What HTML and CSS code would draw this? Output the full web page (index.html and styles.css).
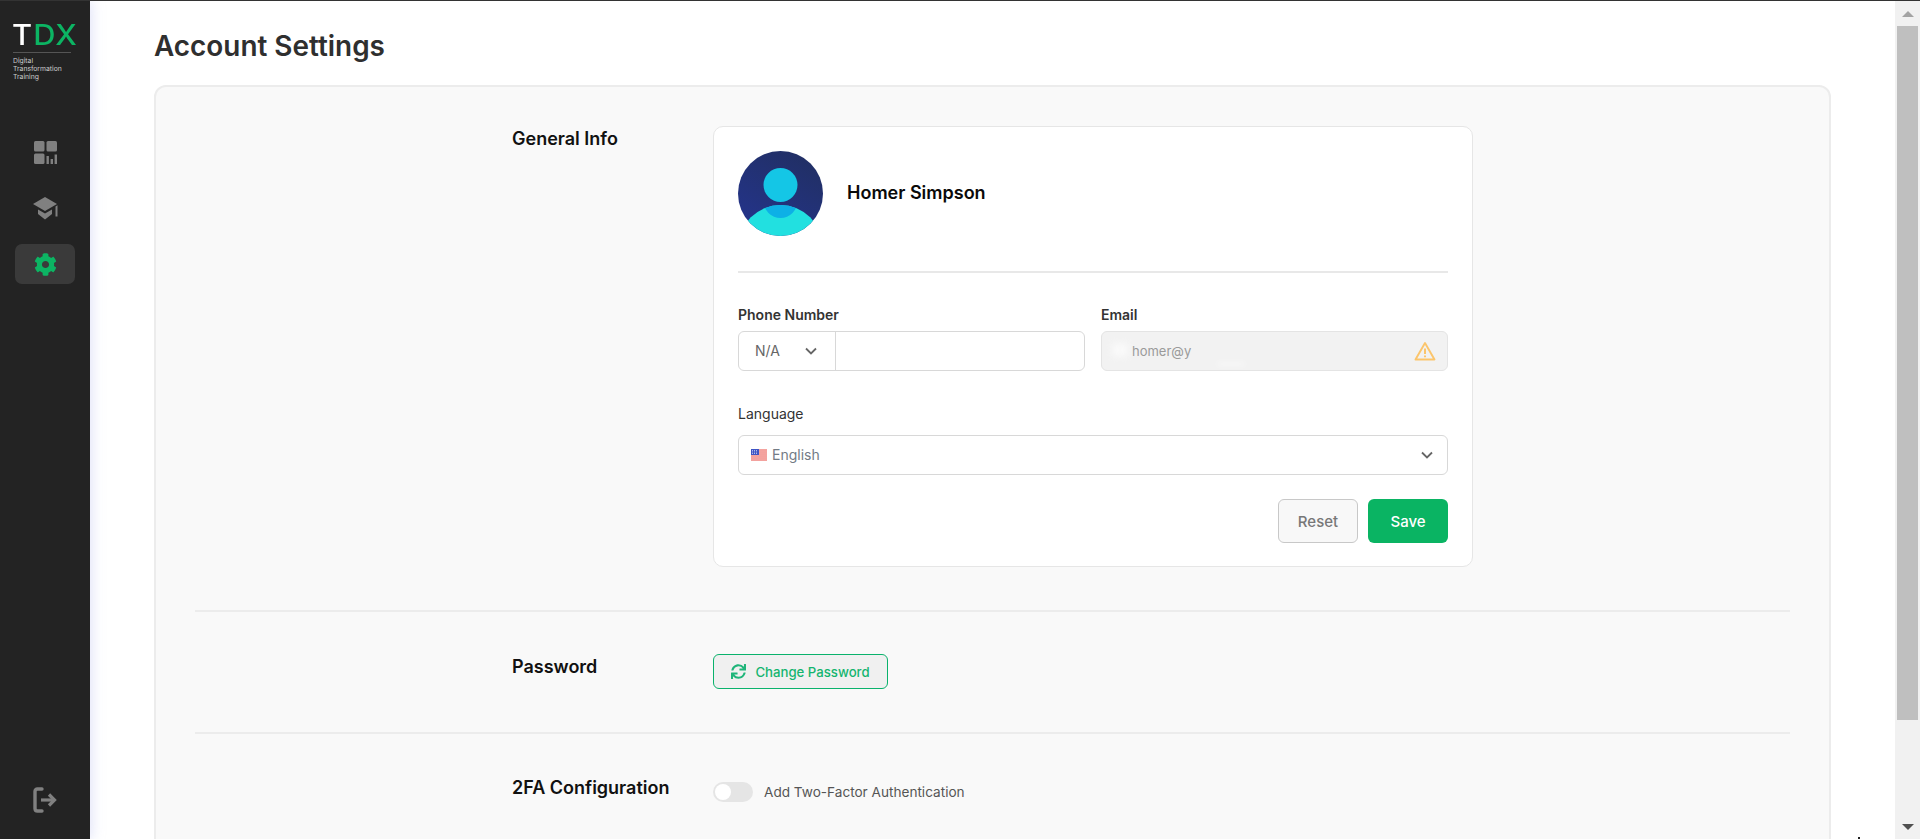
FILE: index.html
```html
<!DOCTYPE html>
<html lang="en">
<head>
<meta charset="utf-8">
<title>Account Settings</title>
<link rel="stylesheet" href="styles.css">
</head>
<body>
<div class="app">
  <aside class="sidebar">
    <div class="logo">
      <div class="logo-mark"><span class="logo-t">T</span><span class="logo-dx">DX</span></div>
      <div class="logo-text">Digital<br>Transformation<br>Training</div>
    </div>
    <nav class="nav">
      <a class="nav-item">
        <svg class="nav-icon" width="23" height="23" viewBox="0 0 23 23"><rect width="10.5" height="10.5" rx="1.5"/><rect x="12.5" width="10.5" height="10.5" rx="1.5"/><rect y="12.5" width="10.5" height="10.5" rx="1.5"/><rect x="12.5" y="15" width="2.4" height="8"/><rect x="16.6" y="18" width="2.4" height="5"/><rect x="20.6" y="13.5" width="2.4" height="9.5"/></svg>
      </a>
      <a class="nav-item">
        <svg class="nav-icon" width="25" height="23" viewBox="0 0 25 23"><path d="M12 0 24 7 12 14 0 7Z"/><path d="M5 12.5 12 16.5 19 12.5V17L12 22.5 5 17Z"/><path d="M22.5 9.5 24.5 8.3V19.5H22.5Z"/></svg>
      </a>
      <a class="nav-item nav-item-active">
        <svg class="nav-icon-active" width="23" height="23" viewBox="0 0 512 512"><path d="M487.4 315.7l-42.6-24.6c4.3-23.2 4.3-47 0-70.2l42.6-24.6c4.9-2.8 7.1-8.6 5.5-14-11.1-35.6-30-67.8-54.7-94.6-3.8-4.1-10-5.1-14.8-2.3L380.8 110c-17.9-15.4-38.5-27.3-60.8-35.1V25.8c0-5.6-3.9-10.5-9.4-11.7-36.7-8.2-74.3-7.8-109.2 0-5.5 1.2-9.4 6.1-9.4 11.7V75c-22.2 7.9-42.8 19.8-60.8 35.1L88.7 85.5c-4.9-2.8-11-1.9-14.8 2.3-24.7 26.7-43.6 58.9-54.7 94.6-1.7 5.4.6 11.2 5.5 14L67.3 221c-4.3 23.2-4.3 47 0 70.2l-42.6 24.6c-4.9 2.8-7.1 8.6-5.5 14 11.1 35.6 30 67.8 54.7 94.6 3.8 4.1 10 5.1 14.8 2.3l42.6-24.6c17.9 15.4 38.5 27.3 60.8 35.1v49.2c0 5.6 3.9 10.5 9.4 11.7 36.7 8.2 74.3 7.8 109.2 0 5.5-1.2 9.4-6.1 9.4-11.7v-49.2c22.2-7.9 42.8-19.8 60.8-35.1l42.6 24.6c4.9 2.8 11 1.9 14.8-2.3 24.7-26.7 43.6-58.9 54.7-94.6 1.5-5.5-.7-11.3-5.6-14.1zM256 336c-44.1 0-80-35.9-80-80s35.9-80 80-80 80 35.9 80 80-35.9 80-80 80z"/></svg>
      </a>
    </nav>
    <a class="logout">
      <svg width="24" height="26" viewBox="0 0 24 26" fill="none" stroke="#808080"><path d="M9 2H4.5Q2 2 2 4.5V21.500Q2 24 4.500 24H9" stroke-width="3.400" stroke-linecap="round"/><path d="M8 13H20" stroke-width="3.200"/><path d="M16 7.500 21.500 13 16 18.500" stroke-width="3.200"/></svg>
    </a>
  </aside>

  <main class="main">
    <h1 class="title">Account Settings</h1>
    <section class="panel">
      <div class="row row-general">
        <h2 class="row-label">General Info</h2>
        <div class="info-card">
          <div class="profile">
            <svg class="avatar" width="85" height="85" viewBox="0 0 85 85">
              <defs>
                <linearGradient id="avatarBg" x1="0.2" y1="1" x2="0.8" y2="0"><stop offset="0" stop-color="#24348c"/><stop offset="1" stop-color="#212f63"/></linearGradient>
                <clipPath id="avatarClip"><circle cx="42.500" cy="42.500" r="42.500"/></clipPath>
                <clipPath id="bodyClip"><circle cx="42.500" cy="96" r="42"/></clipPath>
              </defs>
              <circle cx="42.500" cy="42.500" r="42.500" fill="url(#avatarBg)"/>
              <circle cx="42.500" cy="34" r="17" fill="#14c6e6"/>
              <g clip-path="url(#avatarClip)">
                <circle cx="42.500" cy="96" r="42" fill="#22e0e0"/>
                <circle cx="42.500" cy="50" r="17" fill="#0db0e6" clip-path="url(#bodyClip)"/>
              </g>
            </svg>
            <div class="profile-name">Homer Simpson</div>
          </div>
          <div class="fields">
            <div class="field">
              <label class="field-label">Phone Number</label>
              <div class="phone">
                <div class="phone-code"><span>N/A</span>
                  <svg class="chevron" width="12" height="8" viewBox="0 0 12 8"><path d="M1 1.500 6 6.500 11 1.500"/></svg>
                </div>
                <div class="phone-input"></div>
              </div>
            </div>
            <div class="field">
              <label class="field-label">Email</label>
              <div class="email">
                <span class="email-value">homer@y</span>
                <span class="smudge smudge-left"></span>
                <span class="smudge smudge-bottom"></span>
                <svg class="warn" width="22" height="20" viewBox="0 0 22 20" fill="none" stroke="#fbc56c"><path d="M11 2 20.500 18.500H1.500Z" stroke-width="1.900" stroke-linejoin="round"/><path d="M11 7.500V13M11 14.500V16.300" stroke-width="2"/></svg>
              </div>
            </div>
          </div>
          <div class="language">
            <label class="language-label">Language</label>
            <div class="language-select">
              <svg class="flag" width="16" height="12" viewBox="0 0 16 12"><rect width="16" height="12" fill="#fff"/><path d="M0 1H16M0 3H16M0 5H16M0 7H16M0 9H16M0 11H16" stroke="#e8463f" stroke-width="1"/><rect width="8" height="6" fill="#3f55c4"/><path d="M1 1.500H7M1 3H7M1 4.500H7" stroke="#dfe6ff" stroke-width="0.700" stroke-dasharray="1 1"/></svg>
              <span class="language-value">English</span>
              <svg class="chevron chevron-end" width="12" height="8" viewBox="0 0 12 8"><path d="M1 1.500 6 6.500 11 1.500"/></svg>
            </div>
          </div>
          <div class="actions">
            <button class="btn btn-reset">Reset</button>
            <button class="btn btn-save">Save</button>
          </div>
        </div>
      </div>
      <div class="row row-password">
        <h2 class="row-label">Password</h2>
        <div class="row-body">
          <button class="btn-outline">
            <svg width="15" height="15" viewBox="0 0 512 512" fill="#1fb57a"><path d="M440.65 12.57l4 82.77A247.16 247.16 0 0 0 255.83 8C134.730 8 33.910 94.920 12.290 209.820A12 12 0 0 0 24.090 224h49.050a12 12 0 0 0 11.670-9.260 175.910 175.910 0 0 1 317-56.940l-101.460-4.860a12 12 0 0 0-12.570 12v47.410a12 12 0 0 0 12 12H500a12 12 0 0 0 12-12V12a12 12 0 0 0-12-12h-47.370a12 12 0 0 0-11.980 12.570zM255.830 432a175.610 175.610 0 0 1-146-77.800l101.800 4.870a12 12 0 0 0 12.570-12v-47.400a12 12 0 0 0-12-12H12a12 12 0 0 0-12 12V500a12 12 0 0 0 12 12h47.350a12 12 0 0 0 12-12.600l-4.150-82.570A247.170 247.170 0 0 0 255.830 504c121.110 0 221.930-86.920 243.550-201.820a12 12 0 0 0-11.800-14.180h-49.050a12 12 0 0 0-11.670 9.260A175.860 175.860 0 0 1 255.830 432z"/></svg>
            Change Password
          </button>
        </div>
      </div>
      <div class="row row-2fa">
        <h2 class="row-label">2FA Configuration</h2>
        <div class="toggle-line">
          <span class="toggle"><span class="toggle-knob"></span></span>
          <span class="toggle-text">Add Two-Factor Authentication</span>
        </div>
      </div>
    </section>
  </main>

  <div class="scrollbar">
    <span class="arrow-up"></span>
    <span class="thumb"></span>
    <span class="arrow-down"></span>
  </div>
  <span class="cursor"></span>
</div>
</body>
</html>
```
FILE: styles.css
```css
* { box-sizing: border-box; }
html, body { margin: 0; height: 100%; overflow: hidden; }
body { font-family: Inter, "Open Sans", sans-serif; background: #fff; color: #2f2f2f; }
.app { display: flex; height: 839px; border-top: 1px solid #333; position: relative; overflow: hidden; }

/* sidebar */
.sidebar { width: 90px; flex: none; background: #232323; display: flex; flex-direction: column; box-shadow: 2px 0 12px rgba(170, 175, 235, .35); position: relative; z-index: 1; }
.logo { padding: 17px 0 0 12px; height: 131px; }
.logo-mark { font-size: 28px; font-weight: 500; line-height: 34px; height: 34px; letter-spacing: 1px; transform: scaleX(1.1); transform-origin: left center; white-space: nowrap; }
.logo-t { color: #fff; }
.logo-dx { color: #0cb463; }
.logo-text { margin-left: 1px; width: 58px; border-top: 1px solid #555; padding-top: 4px; font-size: 6.800px; line-height: 8px; color: #ccc; white-space: nowrap; }
.nav { display: flex; flex-direction: column; align-items: center; gap: 16px; }
.nav-item { width: 60px; height: 40px; display: flex; align-items: center; justify-content: center; border-radius: 7px; }
.nav-item-active { background: #3a3a3a; }
.nav-icon { fill: #808080; }
.nav-icon-active { fill: #0cb463; }
.logout { margin-top: auto; margin-bottom: 26px; display: flex; justify-content: center; padding-right: 1px; }

/* main */
.main { flex: 1; min-width: 0; padding: 0 64px; }
.title { margin: 0; height: 84px; padding-top: 27px; font-size: 27.900px; line-height: 36px; font-weight: 600; color: #2f2f2f; }
.panel { background: #f9f9f9; border: 2px solid #ececec; border-radius: 12px; padding: 0 39px; height: 900px; }
.row { display: grid; grid-template-columns: 201px 760px; justify-content: center; border-bottom: 2px solid #ececec; }
.row-general { padding: 39px 0 43px; }
.row-password { padding: 42px 0 43px; }
.row-2fa { padding: 48px 0; border-bottom: 0; }
.row-label { margin: 2px 0 0; font-size: 18px; line-height: 22px; font-weight: 600; color: #111; }
.row-2fa .row-label { margin-top: -5px; }

/* general info card */
.info-card { background: #fff; border: 1px solid #e6e6e6; border-radius: 10px; padding: 24px; height: 441px; }
.profile { display: flex; align-items: center; gap: 24px; height: 122px; padding-bottom: 35px; border-bottom: 2px solid #e8e8e8; }
.avatar { flex: none; display: block; }
.profile-name { font-size: 18px; font-weight: 600; color: #0a0a0a; padding-bottom: 2px; }
.fields { display: grid; grid-template-columns: 347px 347px; gap: 16px; padding-top: 32px; }
.field-label { display: block; font-size: 14px; line-height: 20px; font-weight: 600; color: #333; margin-bottom: 6px; }
.phone { display: flex; height: 40px; border: 1px solid #d8d8d8; border-radius: 6px; }
.phone-code { width: 97px; border-right: 1px solid #d8d8d8; display: flex; align-items: center; justify-content: space-between; padding: 0 18px 1px 16px; font-size: 14px; color: #666; }
.phone-input { flex: 1; }
.chevron { fill: none; stroke: #666; stroke-width: 1.800; flex: none; }
.email { position: relative; height: 40px; background: #f2f2f2; border: 1px solid #e4e4e4; border-radius: 6px; display: flex; align-items: center; padding: 0 11px 1px 30px; font-size: 13px; color: #9a9a9a; }
.email-value { margin-right: auto; }
.smudge { position: absolute; background: #fff; filter: blur(3px); }
.smudge-left { left: 10px; top: 11px; width: 16px; height: 14px; opacity: .6; }
.smudge-bottom { left: 115px; bottom: 5px; width: 28px; height: 2px; }
.language { padding-top: 33px; }
.language-label { display: block; font-size: 14px; line-height: 20px; color: #333; margin-bottom: 11px; }
.language-select { height: 40px; border: 1px solid #d8d8d8; border-radius: 6px; display: flex; align-items: center; padding: 0 14px 1px 12px; gap: 5px; font-size: 14px; color: #737b85; }
.flag { flex: none; }
.language-value { flex: 1; }
.actions { display: flex; justify-content: flex-end; gap: 10px; padding-top: 24px; }
.btn { width: 80px; height: 44px; border-radius: 6px; font: 500 15px Inter, sans-serif; }
.btn-reset { background: #f8f8f8; border: 1px solid #c8c8c8; color: #777; }
.btn-save { background: #0ab463; border: 0; color: #fff; }

/* password */
.row-body { display: flex; }
.btn-outline { width: 175px; height: 35px; display: flex; align-items: center; justify-content: center; gap: 9px; background: #f0f0f0; border: 1px solid #0ab26c; border-radius: 6px; color: #14b56f; font: 500 13.200px Inter, sans-serif; padding: 0; }

/* 2fa */
.toggle-line { display: flex; align-items: center; gap: 11px; height: 20px; }
.toggle { width: 40px; height: 20px; background: #e5e5e5; border-radius: 10px; display: flex; align-items: center; padding-left: 2px; }
.toggle-knob { width: 16px; height: 16px; background: #fff; border-radius: 50%; }
.toggle-text { font-size: 13.600px; color: #555; }

/* scrollbar */
.scrollbar { width: 25px; flex: none; background: #f1f1f1; display: flex; flex-direction: column; align-items: center; }
.thumb { width: 21px; height: 694px; background: #bfbfbf; margin-top: 9px; }
.arrow-up { width: 0; height: 0; margin-top: 10px; border: 6px solid transparent; border-top: 0; border-bottom: 6px solid #a3a3a3; }
.arrow-down { width: 0; height: 0; margin-top: auto; margin-bottom: 9px; border: 6px solid transparent; border-bottom: 0; border-top: 6px solid #505050; }
.cursor { position: absolute; left: 1858px; top: 836px; width: 2px; height: 2px; background: #222; }
```
